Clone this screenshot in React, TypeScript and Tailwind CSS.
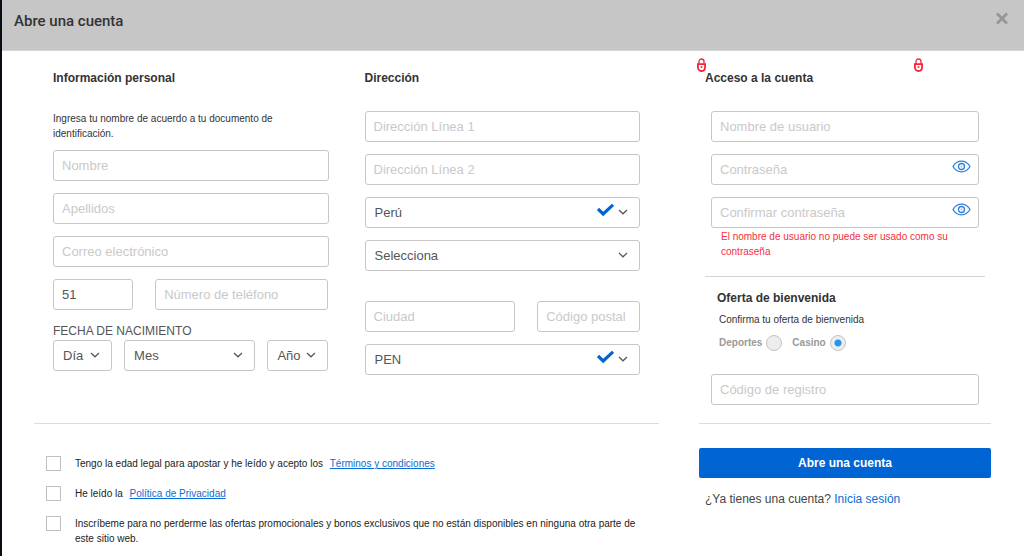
import type { InputHTMLAttributes, ReactNode, SelectHTMLAttributes } from 'react';
import { clsx } from 'clsx';

const fieldClass =
  'h-[31px] w-full min-w-0 rounded-[3px] border border-[#c6c6c6] bg-white px-2 text-[13px] text-[#555] outline-none placeholder:text-[#c9c9c9] focus:border-[#0064d2]';

function Field({ label, className, ...props }: InputHTMLAttributes<HTMLInputElement> & { label: string }) {
  return <input aria-label={label} placeholder={label} className={clsx(fieldClass, className)} {...props} />;
}

function PasswordField({ label }: { label: string }) {
  return (
    <div className="relative">
      <Field label={label} type="password" className="pr-9" />
      <button type="button" aria-label={`Mostrar ${label.toLowerCase()}`} className="absolute top-[6px] right-2">
        <svg width="19" height="13" viewBox="0 0 19 13" fill="none" stroke="#2f80d8" strokeWidth="1.3">
          <path d="M1 6.5C3 3 6 1.200 9.500 1.200S16 3 18 6.500C16 10 13 11.800 9.500 11.800S3 10 1 6.500Z" />
          <circle cx="9.500" cy="6.500" r="3" />
          <circle cx="9.500" cy="6.500" r=".9" fill="#8fbcee" stroke="none" />
        </svg>
      </button>
    </div>
  );
}

type SelectProps = SelectHTMLAttributes<HTMLSelectElement> & {
  label: string;
  options: string[];
  valid?: boolean;
};

function Select({ label, options, valid, className, ...props }: SelectProps) {
  return (
    <div className={clsx('relative', className)}>
      <select aria-label={label} className={clsx(fieldClass, 'appearance-none px-[9px]')} {...props}>
        {options.map(option => (
          <option key={option}>{option}</option>
        ))}
      </select>
      <div className="pointer-events-none absolute top-[6px] right-3 flex gap-1">
        {valid && (
          <svg width="17" height="14" viewBox="0 0 17 14" fill="none" stroke="#0064d2" strokeWidth="3.2">
            <path d="M1 6L6.200 11L16 1.800" />
          </svg>
        )}
        <svg width="10" height="16" viewBox="0 0 10 16" fill="none" stroke="#555" strokeWidth="1.2">
          <path d="M1 7L5 10.800L9 7" />
        </svg>
      </div>
    </div>
  );
}

function Lock({ className }: { className: string }) {
  return (
    <svg className={clsx('absolute top-[7px]', className)} width="9" height="14" viewBox="0 0 9 14" fill="none" stroke="#f0283c">
      <path d="M2 6V3.600C2 1.900 3 1 4.500 1S7 1.900 7 3.600V6" strokeWidth="1.3" />
      <path d="M.9 6.200H8.100V9C8.100 11.500 6.500 13 4.500 13S.9 11.500 .9 9Z" strokeWidth="1.8" />
      <circle cx="4.500" cy="9" r="1" fill="#f0283c" stroke="none" />
    </svg>
  );
}

function Heading({ children, className }: { children: ReactNode; className?: string }) {
  return <h2 className={clsx('text-[12px] leading-[18px] font-bold text-[#333]', className)}>{children}</h2>;
}

function Consent({ children }: { children: ReactNode }) {
  return (
    <label className="flex items-start gap-[14px]">
      <input type="checkbox" className="size-[15px] shrink-0 appearance-none border border-[#c0c0c0] bg-white checked:bg-[#0064d2]" />
      <span className="text-[10px] leading-[15px] text-[#222]">{children}</span>
    </label>
  );
}

function OfferOption({ label, ...props }: InputHTMLAttributes<HTMLInputElement> & { label: string }) {
  return (
    <label className="flex items-center gap-1 text-[10px] leading-4 font-bold text-[#999]">
      {label}
      <input
        type="radio"
        name="offer"
        className="size-4 appearance-none rounded-full border border-[#c4c4c4] bg-[#ededed] checked:bg-[radial-gradient(circle,#2196f3_3px,#ededed_4px)]"
        {...props}
      />
    </label>
  );
}

export default function App() {
  return (
    <div className="min-h-screen border-l-2 border-[#080c14] bg-white font-['Liberation_Sans',Arial,sans-serif]">
      <header className="flex h-[51px] items-start justify-between border-b border-[#d6d6d6] bg-[#c6c6c6] px-3">
        <h1 className="pt-3 font-[Roboto,sans-serif] text-[15px] leading-[18px] font-medium text-[#333]">Abre una cuenta</h1>
        <button type="button" aria-label="Cerrar" className="mt-3 mr-1">
          <svg width="12" height="13" viewBox="0 0 12 13" fill="none" stroke="#969696" strokeWidth="2.8">
            <path d="M1 1.500L11 11.500M11 1.500L1 11.500" />
          </svg>
        </button>
      </header>

      <form className="grid grid-cols-[625fr_292fr] gap-10 pr-[33px] pl-8">
        <div>
          <div className="grid grid-cols-2 gap-9 border-b border-[#dcdcdc] px-[19px] pt-[18px] pb-12">
            <section>
              <Heading>Información personal</Heading>
              <p className="mt-6 pr-8 text-[10px] leading-[15px] text-[#333]">
                Ingresa tu nombre de acuerdo a tu documento de identificación.
              </p>
              <div className="mt-[9px] flex flex-col gap-3">
                <Field label="Nombre" />
                <Field label="Apellidos" />
                <Field label="Correo electrónico" type="email" />
                <div className="grid grid-cols-[80fr_173fr] gap-[22px]">
                  <Field label="Prefijo" defaultValue="51" />
                  <Field label="Número de teléfono" type="tel" />
                </div>
              </div>
              <fieldset className="mt-3">
                <legend className="text-[12px] leading-[18px] text-[#555]">FECHA DE NACIMIENTO</legend>
                <div className="grid grid-cols-[59fr_131fr_61fr] gap-3">
                  <Select label="Día" options={['Día', '1', '2', '3']} />
                  <Select label="Mes" options={['Mes', 'Enero', 'Febrero', 'Marzo']} />
                  <Select label="Año" options={['Año', '2000', '1999', '1998']} />
                </div>
              </fieldset>
            </section>

            <section>
              <Heading>Dirección</Heading>
              <div className="mt-6 flex flex-col gap-3">
                <Field label="Dirección Línea 1" />
                <Field label="Dirección Línea 2" />
                <Select label="País" options={['Perú']} valid />
                <Select label="Región" options={['Selecciona']} />
              </div>
              <div className="mt-[30px] flex flex-col gap-3">
                <div className="grid grid-cols-[151fr_103fr] gap-[22px]">
                  <Field label="Ciudad" />
                  <Field label="Código postal" />
                </div>
                <Select label="Moneda" options={['PEN']} valid />
              </div>
            </section>
          </div>

          <div className="flex flex-col gap-[15px] pt-8 pr-3 pl-3">
            <Consent>
              Tengo la edad legal para apostar y he leído y acepto los{' '}
              <a href="#terminos" className="ml-1 text-[#0a6cd6] underline">Términos y condiciones</a>
            </Consent>
            <Consent>
              He leído la <a href="#privacidad" className="ml-1 text-[#0a6cd6] underline">Política de Privacidad</a>
            </Consent>
            <Consent>
              Inscríbeme para no perderme las ofertas promocionales y bonos exclusivos que no están disponibles en ninguna otra parte de este sitio web.
            </Consent>
          </div>
        </div>

        <div className="relative pt-[18px]">
          <Lock className="-left-0.5" />
          <Lock className="left-[215px]" />
          <section className="px-[6px]">
            <Heading>Acceso a la cuenta</Heading>
            <div className="mt-6 flex flex-col gap-3 px-[6px]">
              <Field label="Nombre de usuario" />
              <PasswordField label="Contraseña" />
              <PasswordField label="Confirmar contraseña" />
            </div>
            <p className="mt-px border-b border-[#d4d4d4] px-4 pb-[17px] text-[10px] leading-[15px] text-[#f5303c]">
              El nombre de usuario no puede ser usado como su contraseña
            </p>
          </section>

          <section className="border-b border-[#dcdcdc] px-3 pt-3 pb-[18px]">
            <Heading className="pl-[6px]">Oferta de bienvenida</Heading>
            <p className="mt-[5px] pl-2 text-[10px] leading-[15px] text-[#333]">Confirma tu oferta de bienvenida</p>
            <div className="mt-2 mb-[23px] flex gap-[10px] pl-2">
              <OfferOption label="Deportes" />
              <OfferOption label="Casino" defaultChecked />
            </div>
            <Field label="Código de registro" />
          </section>

          <button type="submit" className="mt-6 h-[30px] w-full rounded-[2px] bg-[#0064d2] text-[12px] font-bold text-white">
            Abre una cuenta
          </button>
          <p className="mt-3 pl-[6px] text-[12px] leading-[18px] text-[#444]">
            ¿Ya tienes una cuenta? <a href="#login" className="text-[#0a6cd6]">Inicia sesión</a>
          </p>
        </div>
      </form>
    </div>
  );
}
